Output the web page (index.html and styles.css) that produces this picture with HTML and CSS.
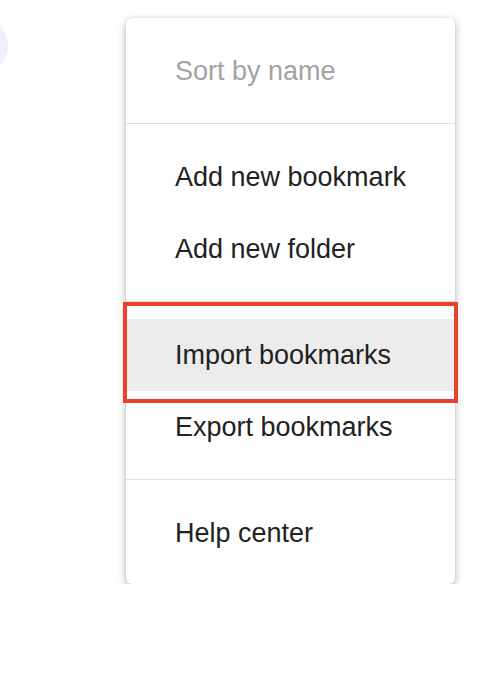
FILE: index.html
```html
<!DOCTYPE html>
<html lang="en">
<head>
  <title>Bookmarks menu</title>
  <meta charset="utf-8"/>
  <link rel="stylesheet" href="styles.css">
</head>
<body>

  <div class="avatar"></div>

  <div class="menu">
    <div class="item disabled">Sort by name</div>
    <div class="sep"></div>
    <div class="item">Add new bookmark</div>
    <div class="item">Add new folder</div>
    <div class="sep"></div>
    <div class="item hover">
      Import bookmarks
      <span class="mark"></span>
    </div>
    <div class="item">Export bookmarks</div>
    <div class="sep"></div>
    <div class="item">Help center</div>
  </div>

</body>
</html>
```

FILE: styles.css
```css
    body {
      margin: 0;
      background: #fff;
      font-family: "Liberation Sans", Arial, sans-serif;
      overflow: hidden;
    }

    .avatar {
      position: absolute;
      left: -48px;
      top: 18px;
      width: 56px;
      height: 56px;
      border-radius: 50%;
      background: #eef0fa;
    }

    .menu {
      margin: 18px 0 0 126px;
      width: 329px;
      padding: 17px 0 15px;
      background: #fff;
      border-radius: 6px;
      box-shadow: 0 3px 8px rgba(0, 0, 0, 0.3), 0 0 2px rgba(0, 0, 0, 0.1);
    }

    .item {
      position: relative;
      height: 72px;
      line-height: 72px;
      padding-left: 49px;
      font-size: 27px;
      color: #222;
    }

    .item.disabled {
      color: #a3a3a3;
    }

    .item.hover {
      background: #ececec;
    }

    .sep {
      height: 1px;
      margin: 16px 0 17px;
      background: #e0e0e0;
    }

    .mark {
      position: absolute;
      left: -3px;
      right: -3px;
      top: -17px;
      bottom: -12px;
      border: 4px solid #e8412c;
    }
```
